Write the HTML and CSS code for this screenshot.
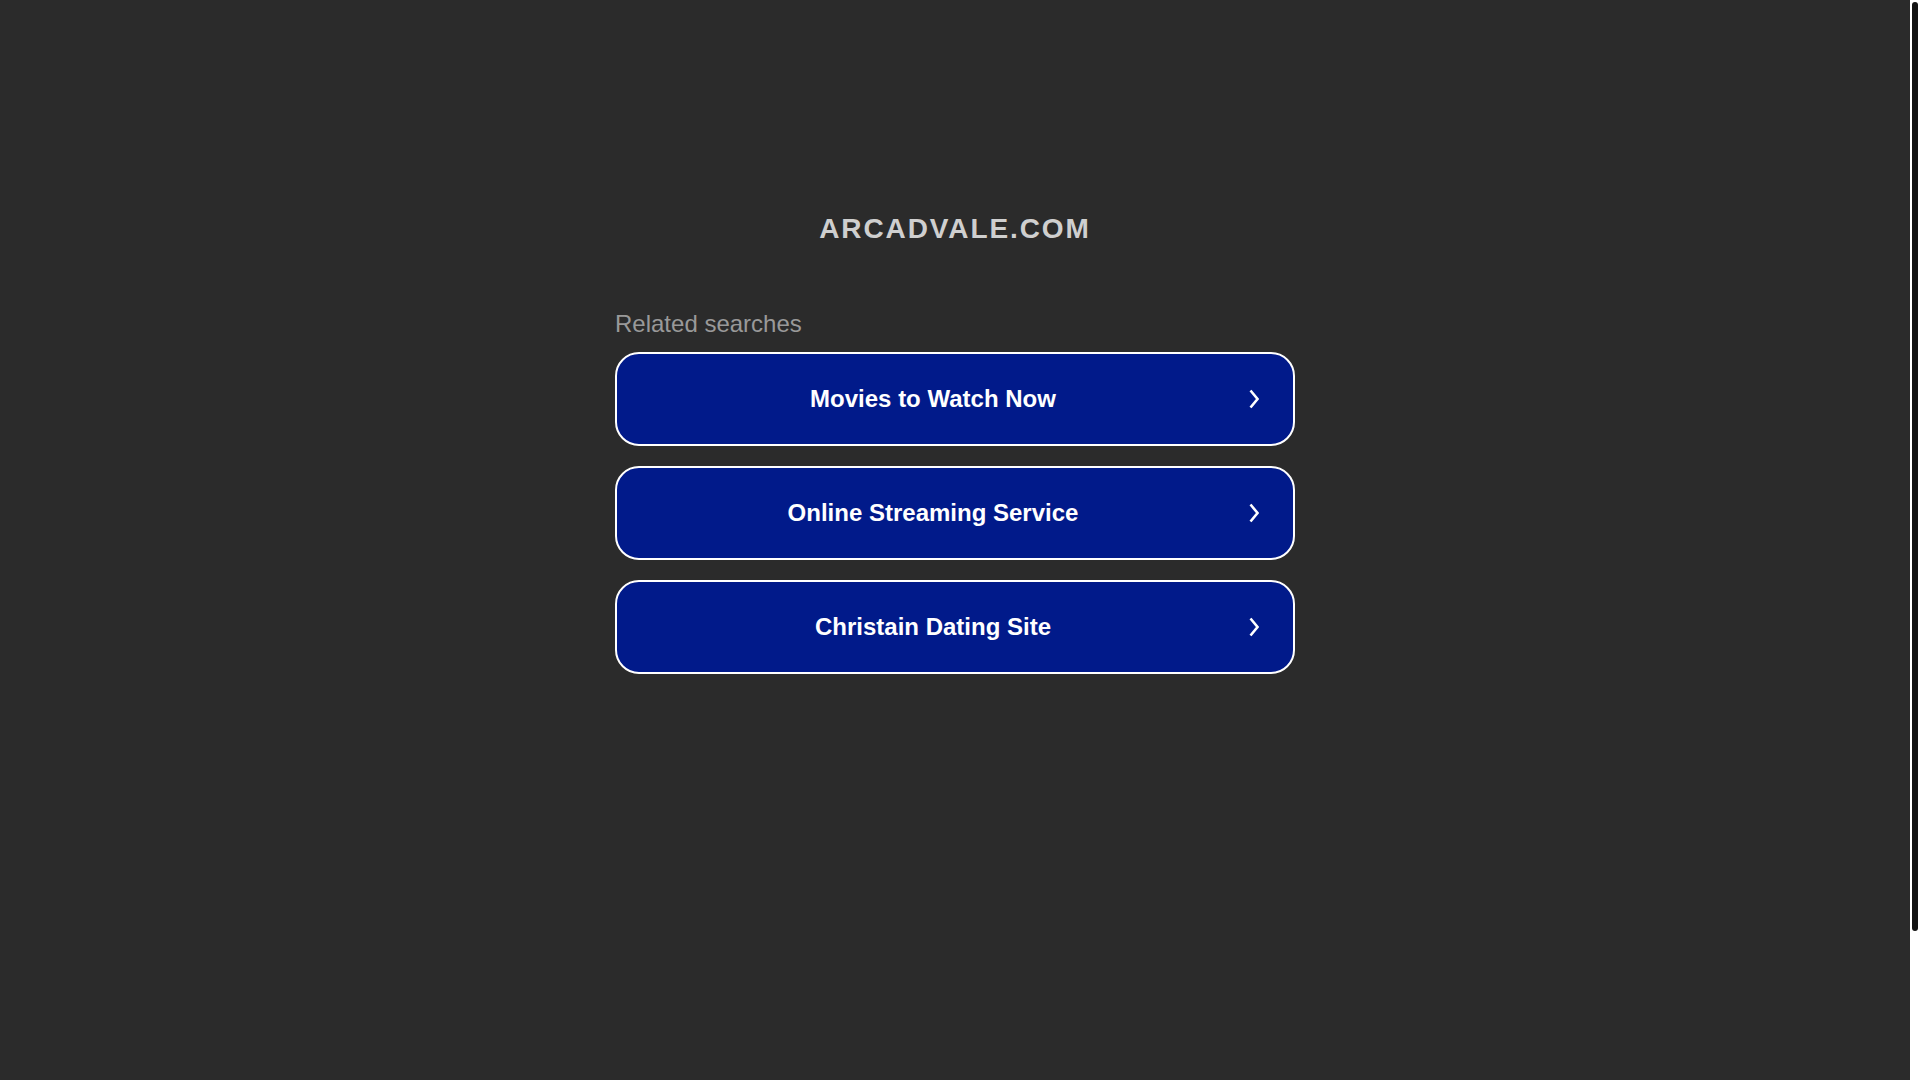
FILE: index.html
```html
<!DOCTYPE html>
<html lang="en">
<head>
    <meta charset="UTF-8">
    <meta name="viewport" content="width=device-width, initial-scale=1.0">
    <title>arcadvale.com</title>
    <link rel="stylesheet" href="styles.css">
</head>
<body>
    <div class="page">
        <h1 class="domain">ARCADVALE.COM</h1>
        <div class="searches">
            <p class="searches-title">Related searches</p>
            <a class="search-link" href="#">
                <span class="search-text">Movies to Watch Now</span>
                <svg class="arrow" viewBox="0 0 10 20" width="10" height="20"><polyline points="1.5,1.5 8.5,10 1.5,18.5"/></svg>
            </a>
            <a class="search-link" href="#">
                <span class="search-text">Online Streaming Service</span>
                <svg class="arrow" viewBox="0 0 10 20" width="10" height="20"><polyline points="1.5,1.5 8.5,10 1.5,18.5"/></svg>
            </a>
            <a class="search-link" href="#">
                <span class="search-text">Christain Dating Site</span>
                <svg class="arrow" viewBox="0 0 10 20" width="10" height="20"><polyline points="1.5,1.5 8.5,10 1.5,18.5"/></svg>
            </a>
        </div>
    </div>
    <!-- scroll rail on the right edge -->
    <div class="rail">
        <div class="rail-thumb"></div>
    </div>
</body>
</html>
```

FILE: styles.css
```css
html {
    background-color: #2b2b2b;
}
body {
    margin: 0;
    display: flex;
    height: 100vh;
    background-color: #2b2b2b;
    font-family: "Liberation Sans", Arial, sans-serif;
}
.page {
    flex: 1;
    display: flex;
    flex-direction: column;
    align-items: center;
    padding-top: 213px;
}
.rail {
    width: 10px;
    background-color: #fff;
}
.rail-thumb {
    width: 6px;
    height: 929px;
    margin: 2px 2px 0;
    border-radius: 3px;
    background-color: #121212;
}
.domain {
    margin: 0;
    font-size: 28px;
    line-height: 32px;
    font-weight: bold;
    letter-spacing: 1.9px;
    color: #cfcfcf;
}
.searches {
    width: 680px;
    margin-top: 65px;
}
.searches-title {
    margin: 0 0 15px;
    font-size: 24px;
    line-height: 27px;
    color: #999;
}
.search-link {
    display: flex;
    align-items: center;
    box-sizing: border-box;
    height: 94px;
    margin-bottom: 20px;
    border: 2px solid #fff;
    border-radius: 24px;
    background-color: #011a8a;
    color: #fff;
    text-decoration: none;
}
.search-text {
    flex: 1;
    text-align: center;
    font-size: 24px;
    font-weight: bold;
}
.arrow {
    margin-right: 34px;
    fill: none;
    stroke: #fff;
    stroke-width: 2.6;
}
```
